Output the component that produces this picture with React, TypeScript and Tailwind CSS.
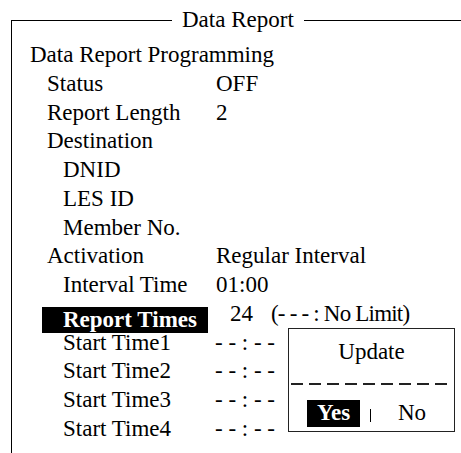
const rows: { label: string; indent: number; value?: string }[] = [
  { label: 'Data Report Programming', indent: 18 },
  { label: 'Status', indent: 35, value: 'OFF' },
  { label: 'Report Length', indent: 35, value: '2' },
  { label: 'Destination', indent: 35 },
  { label: 'DNID', indent: 51 },
  { label: 'LES ID', indent: 51 },
  { label: 'Member No.', indent: 51 },
  { label: 'Activation', indent: 35, value: 'Regular Interval' },
  { label: 'Interval Time', indent: 51, value: '01:00' },
];

const startTimes = ['Start Time1', 'Start Time2', 'Start Time3', 'Start Time4'];

function Row({ label, indent, value }: { label: string; indent: number; value?: string }) {
  return (
    <div className="flex h-[28.75px] whitespace-nowrap">
      <span style={{ paddingLeft: indent }} className="w-[204px] shrink-0">
        {label}
      </span>
      {value && <span>{value}</span>}
    </div>
  );
}

export default function App() {
  return (
    <div className="relative flex h-[453px] w-[461px] flex-col overflow-hidden bg-white pt-[5px] font-['Liberation_Serif','Times_New_Roman',serif] text-[23px] leading-[28.75px] text-black">
      {/* Title bar */}
      <div className="flex h-[29px] shrink-0 items-start">
        <div className="ml-[11px] mt-[15px] h-[14px] w-[161px] border-l border-t border-black" />
        <span className="px-[10px] leading-[29px]">Data Report</span>
        <div className="mt-[15px] h-px flex-1 bg-black" />
      </div>

      {/* Body */}
      <div className="ml-[11px] flex-1 border-l border-black pt-[7px]">
        {rows.map((r) => (
          <Row key={r.label} {...r} />
        ))}

        {/* Selected row */}
        <div className="flex h-[28.75px] items-start whitespace-nowrap">
          <div className="ml-[30px] mt-[7px] flex h-[26px] w-[166px] shrink-0 items-center bg-black pl-[21px] font-bold leading-[26px] text-white">
            Report Times
          </div>
          <span className="ml-[22px]">24</span>
          <span className="ml-[18px] tracking-[-0.8px]">(- - - : No Limit)</span>
        </div>

        {startTimes.map((s) => (
          <div key={s} className="flex h-[28.75px] whitespace-nowrap">
            <span className="w-[203px] shrink-0 pl-[51px]">{s}</span>
            <span>- - : - -</span>
          </div>
        ))}
      </div>

      {/* Update dialog */}
      <div className="absolute left-[288px] top-[328px] flex h-[104px] w-[167px] flex-col border border-[#222] bg-white">
        <div className="pt-[11px] text-center leading-[24px]">Update</div>
        <div className="ml-[2px] mt-[19px] h-[1.5px] w-[156px] bg-[repeating-linear-gradient(90deg,#222_0_12px,transparent_12px_18px)]" />
        <div className="mt-[15px] flex h-[27px] items-center">
          <span className="ml-[18px] flex h-[27px] w-[53px] items-center justify-center bg-black font-bold text-white">
            Yes
          </span>
          <span className="ml-[10px] h-[13px] w-px translate-y-[2px] bg-black" />
          <span className="ml-[27px]">No</span>
        </div>
      </div>
    </div>
  );
}
